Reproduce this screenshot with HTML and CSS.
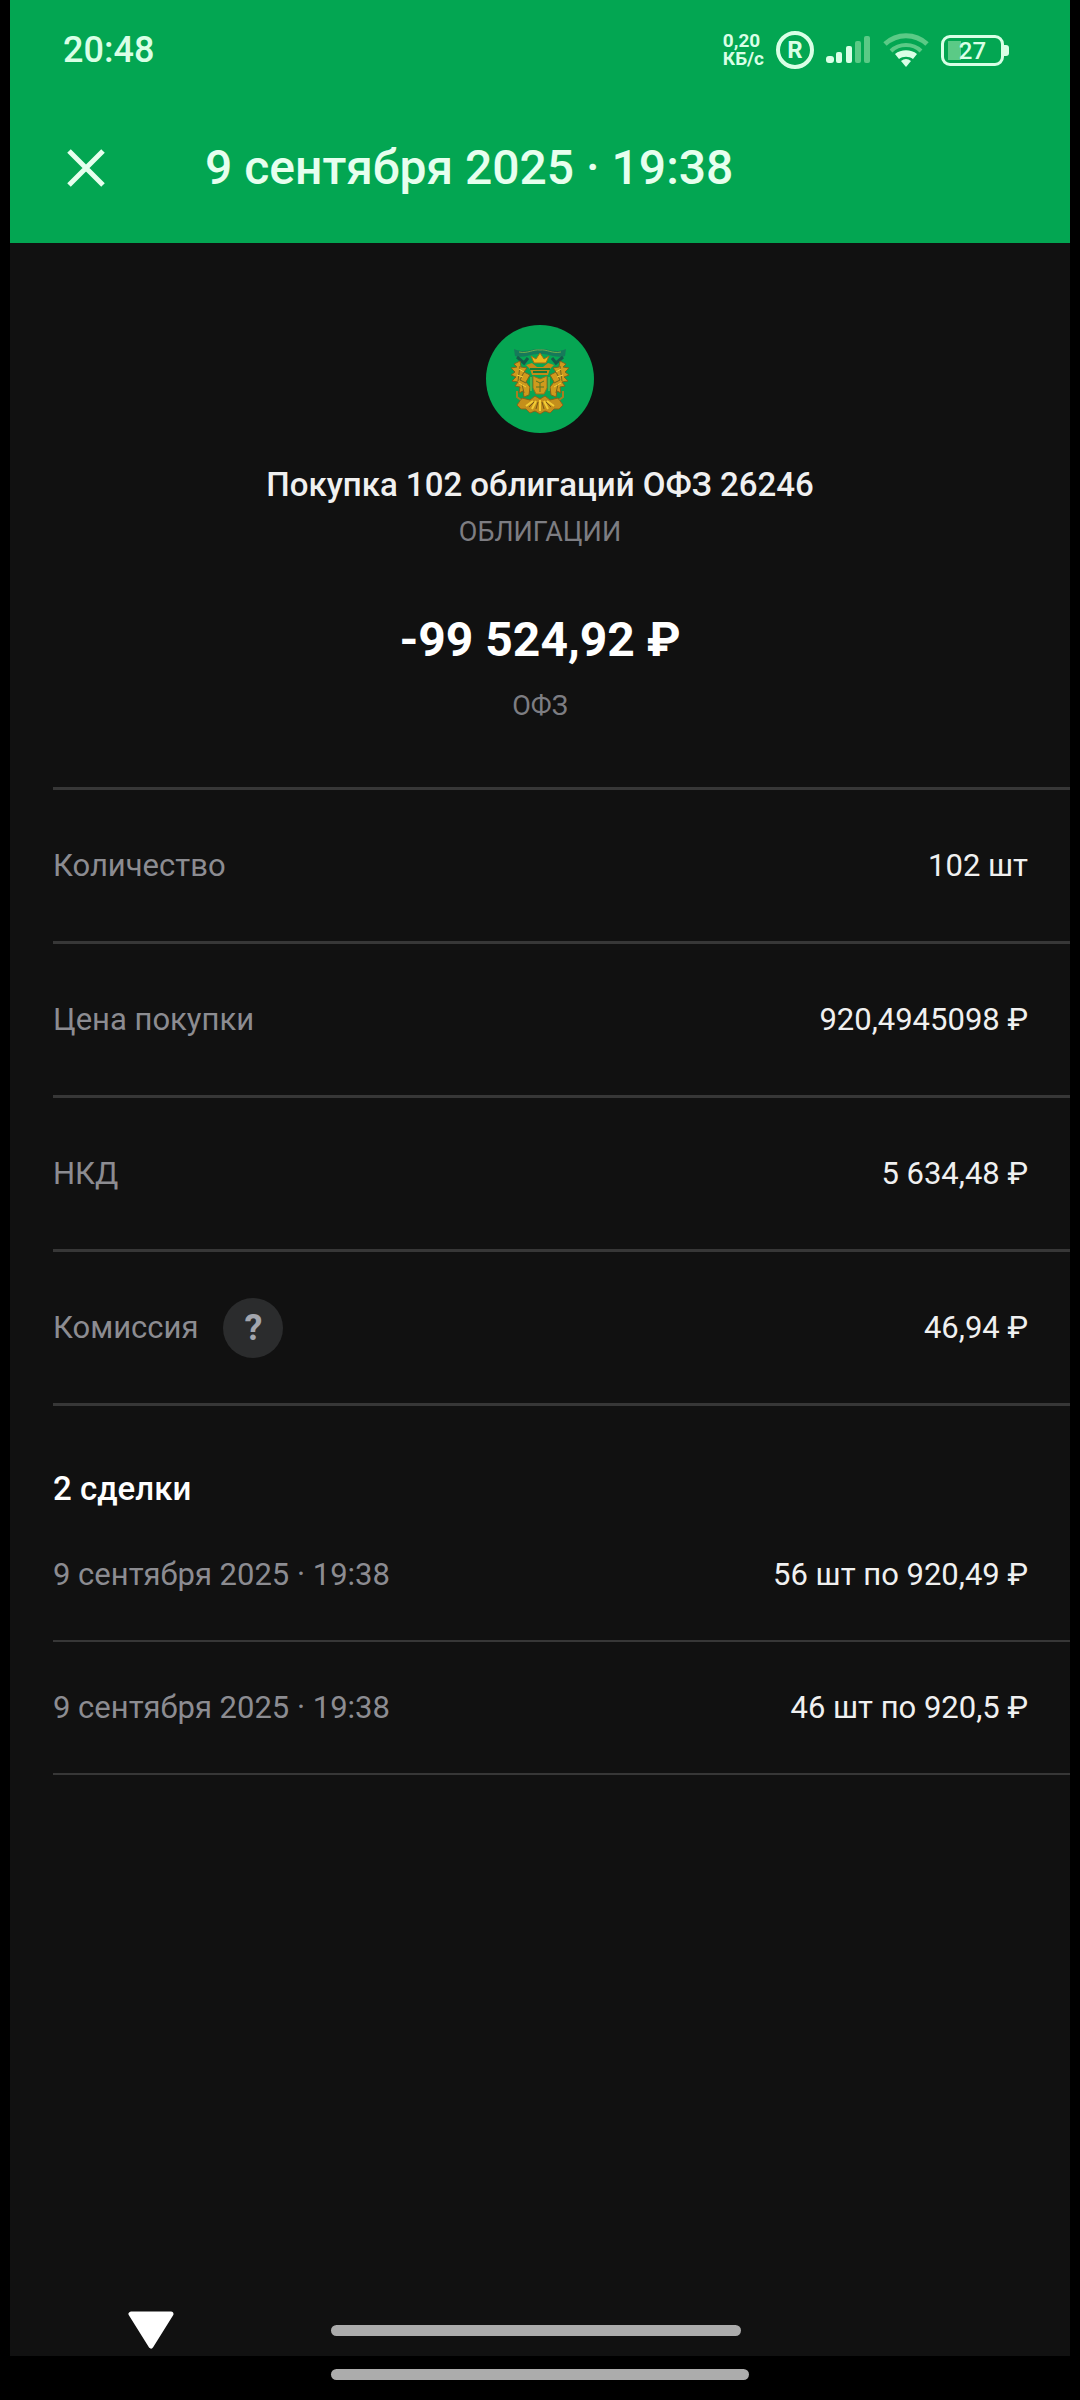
FILE: index.html
```
<!DOCTYPE html>
<html lang="ru">

<head>
    <meta charset="UTF-8">
    <meta name="viewport" content="width=device-width, initial-scale=1.0">
    <title>Покупка 102 облигаций ОФЗ 26246</title>
    <link rel="stylesheet" href="styles.css">
</head>

<body>

    <div class="screen">
        <header class="header">
            <div class="status-bar">
                <span class="time">20:48</span>
                <div class="status-icons">
                    <div class="net-speed"><span>0,20</span><span>КБ/с</span></div>
                    <div class="roaming">R</div>
                    <svg class="signal" width="45" height="28" viewBox="0 0 45 28">
                        <g fill="#d9ffe6">
                            <rect x="0" y="20" width="8" height="7" rx="3" />
                            <rect x="10" y="16" width="6" height="11" rx="2" />
                            <rect x="20" y="10" width="6" height="17" rx="2" />
                        </g>
                        <g fill="#5bca86">
                            <rect x="29" y="5" width="6" height="22" rx="2" />
                            <rect x="38" y="0" width="6" height="27" rx="2" />
                        </g>
                    </svg>
                    <svg class="wifi" width="46" height="34" viewBox="0 0 46 34" fill="none">
                        <path d="M2 11C14 0 32 0 44 11" stroke="#5bca86" stroke-width="5" />
                        <path d="M8 18C16 10 30 10 38 18" stroke="#5bca86" stroke-width="4" />
                        <path d="M12 21C18 16 28 16 34 21L30 26C26 23 20 23 16 26Z" fill="#d9ffe6" />
                        <path d="M18 28Q23 24 28 28L23 34Z" fill="#d9ffe6" />
                    </svg>
                    <div class="battery"><span>27</span></div>
                </div>
            </div>
            <div class="title-bar">
                <button class="close" type="button" aria-label="Закрыть">
                    <svg width="38" height="38" viewBox="0 0 38 38">
                        <path d="M2 2L36 36M36 2L2 36" stroke="#e6ffee" stroke-width="5" />
                    </svg>
                </button>
                <h1>9 сентября 2025 · 19:38</h1>
            </div>
        </header>

        <main>
            <section class="summary">
                <svg class="logo" width="108" height="108" viewBox="0 0 108 108">
                    <circle cx="54" cy="54" r="54" fill="#06a653" />
                    <!-- ribbon -->
                    <path d="M28 24C40 29 46 23 54 24C62 23 68 29 80 24L79 31C70 34 63 28 54 29C45 28 38 34 29 31Z" fill="#167a5a" />
                    <path d="M33 27C42 29 47 24 54 25C61 24 66 29 75 27" fill="none" stroke="#6fae4a" stroke-width="1" />
                    <path d="M31 32l7 6 4-5M77 32l-7 6-4-5" fill="none" stroke="#155b49" stroke-width="3" />
                    <!-- crown and heads -->
                    <path d="M48 38l-3-7 5 3 4-6 4 6 5-3-3 7z" fill="#eab71c" stroke="#98701a" stroke-width="1" />
                    <path d="M51 42L46 38 40 40 44 44 46 50H62L64 44 68 40 62 38 57 42Z" fill="#c48a19" />
                    <path d="M44 44h20M47 47h14" stroke="#177c38" stroke-width="2" />
                    <!-- wings -->
                    <g id="wing" fill="#d09a1c" stroke="#80641a" stroke-width="1">
                        <path d="M34 36L28 39 31 42 25 43 29 47 25 50 30 52 26 56 32 57 29 61 34 62 33 68 37 66 38 72 43 70 44 62 40 57 44 50 38 47 41 43 35 42Z" />
                        <path d="M34 41L32 56M38 47L34 55 40 58M36 59L38 68" fill="none" stroke="#73641c" />
                        <path d="M33 44l5 3M31 50l6 2M33 58l7 4" stroke="#f4ce38" />
                    </g>
                    <use href="#wing" transform="matrix(-1 0 0 1 108 0)" />
                    <!-- shield -->
                    <path d="M47 51L54 54 61 51V63L58 69H50L47 63Z" fill="#d09a1c" stroke="#92701d" />
                    <path d="M50 56l4 2 4-2M50 62h8M54 58v9" fill="none" stroke="#597321" stroke-width="1" />
                    <path d="M45 52v14M63 52v14" stroke="#8fc64b" stroke-width="1" />
                    <!-- tail -->
                    <path d="M49 71L54 74 59 71 64 75 72 73 77 80 73 84 68 84 64 88 59 86 54 89 49 86 44 88 40 84 35 84 31 80 36 73 44 75Z" fill="#c48f1b" stroke="#88631b" />
                    <path d="M54 75v11M50 76l-4 8M58 76l4 8M47 76l-7 5M61 76l7 5" stroke="#f2cd35" stroke-width="2" />
                    <path d="M52 77l-2 7M56 77l2 7M48 77l-5 5M60 77l5 5" stroke="#75581a" stroke-width="1" />
                    <path d="M31 66v6l4 3M77 66v6l-4 3" fill="none" stroke="#a77d20" stroke-width="2" />
                </svg>
                <h2>Покупка 102 облигаций ОФЗ 26246</h2>
                <p class="caption">ОБЛИГАЦИИ</p>
                <p class="amount">-99 524,92 ₽</p>
                <p class="caption">ОФЗ</p>
            </section>

            <dl class="details">
                <div class="row">
                    <dt>Количество</dt>
                    <dd>102 шт</dd>
                </div>
                <div class="row">
                    <dt>Цена покупки</dt>
                    <dd>920,4945098 ₽</dd>
                </div>
                <div class="row">
                    <dt>НКД</dt>
                    <dd>5 634,48 ₽</dd>
                </div>
                <div class="row">
                    <dt>Комиссия <button class="help" type="button" aria-label="О комиссии">?</button></dt>
                    <dd>46,94 ₽</dd>
                </div>
            </dl>

            <section class="deals">
                <h3>2 сделки</h3>
                <dl>
                    <div class="row">
                        <dt>9 сентября 2025 · 19:38</dt>
                        <dd>56 шт по 920,49 ₽</dd>
                    </div>
                    <div class="row">
                        <dt>9 сентября 2025 · 19:38</dt>
                        <dd>46 шт по 920,5 ₽</dd>
                    </div>
                </dl>
            </section>
        </main>

        <div class="gesture-bar">
            <button class="hide" type="button" aria-label="Скрыть">
                <svg width="46" height="38" viewBox="0 0 46 38">
                    <path d="M3 3H43L23 35Z" fill="#fff" stroke="#fff" stroke-width="5" stroke-linejoin="round" />
                </svg>
            </button>
            <div class="handle"></div>
        </div>
    </div>

    <footer class="system-bar">
        <div class="handle"></div>
    </footer>

</body>

</html>
```
FILE: styles.css
```
* {
    box-sizing: border-box;
    margin: 0;
    padding: 0;
}

body {
    display: flex;
    flex-direction: column;
    min-height: 100vh;
    background-color: #000;
    color: #f0f0f0;
    font-family: Roboto, "Liberation Sans", sans-serif;
    font-size: 31px;
    line-height: 40px;
}

button {
    display: flex;
    align-items: center;
    justify-content: center;
    border: none;
    background: none;
    font-family: inherit;
    cursor: pointer;
}

svg {
    display: block;
}

.screen {
    flex: 1;
    display: flex;
    flex-direction: column;
    margin: 0 10px;
    background-color: #111;
}

/* Header */
.header {
    background-color: #03a652;
    color: #e6ffee;
}

.status-bar {
    display: flex;
    align-items: center;
    justify-content: space-between;
    height: 100px;
    padding: 0 66px 0 53px;
    color: #d9ffe6;
}

.time {
    font-size: 36px;
    font-weight: 500;
}

.status-icons {
    display: flex;
    align-items: center;
    gap: 12px;
}

.net-speed {
    display: flex;
    flex-direction: column;
    font-size: 19px;
    font-weight: 700;
    line-height: 18px;
}

.roaming {
    width: 38px;
    height: 38px;
    border: 4px solid #d9ffe6;
    border-radius: 50%;
    font-size: 24px;
    font-weight: 700;
    line-height: 30px;
    text-align: center;
}

.battery {
    position: relative;
    width: 63px;
    height: 31px;
    border: 3px solid #d9ffe6;
    border-radius: 9px;
    background: linear-gradient(90deg, #5bca86 13px, transparent 13px) 4px 3px / 47px 19px no-repeat;
    font-size: 24px;
    font-weight: 500;
    line-height: 26px;
    text-align: center;
}

/* battery tip */
.battery::after {
    content: "";
    position: absolute;
    top: 7px;
    right: -8px;
    width: 5px;
    height: 11px;
    border-radius: 0 3px 3px 0;
    background-color: #d9ffe6;
}

.title-bar {
    display: flex;
    align-items: center;
    gap: 100px;
    height: 143px;
    padding: 0 57px 8px;
}

.title-bar h1 {
    font-size: 48px;
    font-weight: 500;
    line-height: 56px;
}

/* Summary */
.summary {
    display: flex;
    flex-direction: column;
    align-items: center;
    padding: 82px 32px 61px;
    text-align: center;
}

.summary h2 {
    margin-top: 32px;
    font-size: 33px;
    font-weight: 500;
}

.caption {
    margin-top: 7px;
    color: #7d7d82;
    font-size: 27px;
}

.amount {
    margin: 60px 0 11px;
    color: #fff;
    font-size: 48px;
    font-weight: 700;
    line-height: 56px;
}

/* Rows */
.row {
    display: flex;
    align-items: center;
    justify-content: space-between;
    min-height: 133px;
    padding-right: 42px;
    border-bottom: 2px solid #373737;
}

.row dt {
    display: flex;
    align-items: center;
    gap: 25px;
    color: #8c8c91;
}

.details,
.deals {
    margin-left: 43px;
}

.details {
    border-top: 3px solid #373737;
}

.details .row {
    min-height: 154px;
    border-bottom-width: 3px;
}

.help {
    width: 60px;
    height: 60px;
    border-radius: 50%;
    background-color: #2b2c2d;
    color: #a3a6ae;
    font-size: 36px;
    font-weight: 700;
}

.deals h3 {
    padding-top: 63px;
    color: #fff;
    font-size: 33px;
    font-weight: 500;
}

/* Bottom bars */
.gesture-bar {
    display: flex;
    align-items: center;
    gap: 157px;
    margin-top: auto;
    padding: 0 118px 7px;
}

.handle {
    width: 410px;
    height: 11px;
    border-radius: 6px;
    background-color: #acacac;
}

.system-bar {
    display: flex;
    justify-content: center;
    padding: 13px 0 20px;
}

.system-bar .handle {
    width: 418px;
}
```
